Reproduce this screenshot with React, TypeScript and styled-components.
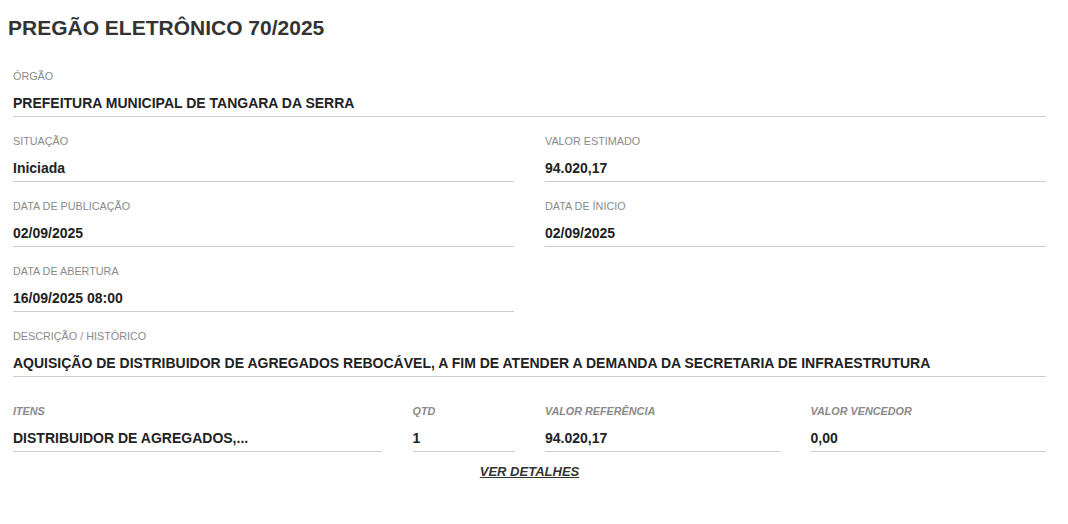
import React from "react";
import styled, { createGlobalStyle } from "styled-components";

const GlobalStyle = createGlobalStyle`
  html, body { margin: 0; padding: 0; background: #ffffff; }
  body { font-family: "Liberation Sans", Arial, sans-serif; }
`;

const Page = styled.div`
  padding: 15px 22px 20px 8px;
`;

const Title = styled.h1`
  margin: 0 0 29px 0;
  font-size: 21px;
  line-height: 25px;
  font-weight: 700;
  color: #333333;
`;

const Details = styled.div`
  margin-left: 5px;
  display: flex;
  flex-direction: column;
  gap: 17px;
`;

const TwoCols = styled.div`
  display: grid;
  grid-template-columns: 1fr 1fr;
  column-gap: 31px;
`;

const ItemsGrid = styled.div`
  margin-top: 10px;
  display: grid;
  grid-template-columns: 369px 102px 235px 235px;
  column-gap: 30.5px;
`;

const Field = styled.div`
  display: flex;
  flex-direction: column;
  padding-bottom: 4px;
  border-bottom: 1px solid #cccccc;
`;

const Label = styled.span<{ $italic?: boolean }>`
  font-size: 10.8px;
  line-height: 14px;
  margin-bottom: 11px;
  color: #8a8a8a;
  font-weight: ${(p) => (p.$italic ? 700 : 400)};
  font-style: ${(p) => (p.$italic ? "italic" : "normal")};
  text-transform: uppercase;
`;

const Value = styled.span`
  font-size: 14px;
  line-height: 18px;
  font-weight: 700;
  color: #222222;
  white-space: nowrap;
`;

const LinkRow = styled.div`
  display: flex;
  justify-content: center;
  margin-top: -6px;
`;

const DetailsLink = styled.a`
  font-size: 13px;
  line-height: 18px;
  font-weight: 700;
  font-style: italic;
  color: #333333;
  text-decoration: underline;
  cursor: pointer;
`;

const Info = ({ label, value, italic }: { label: string; value: string; italic?: boolean }) => (
  <Field>
    <Label $italic={italic}>{label}</Label>
    <Value>{value}</Value>
  </Field>
);

export default function App() {
  return (
    <>
      <GlobalStyle />
      <Page>
        <Title>PREGÃO ELETRÔNICO 70/2025</Title>
        <Details>
          <Info label="Órgão" value="PREFEITURA MUNICIPAL DE TANGARA DA SERRA" />
          <TwoCols>
            <Info label="Situação" value="Iniciada" />
            <Info label="Valor Estimado" value="94.020,17" />
          </TwoCols>
          <TwoCols>
            <Info label="Data de Publicação" value="02/09/2025" />
            <Info label="Data de Ínicio" value="02/09/2025" />
          </TwoCols>
          <TwoCols>
            <Info label="Data de Abertura" value="16/09/2025 08:00" />
          </TwoCols>
          <Info
            label="Descrição / Histórico"
            value="AQUISIÇÃO DE DISTRIBUIDOR DE AGREGADOS REBOCÁVEL, A FIM DE ATENDER A DEMANDA DA SECRETARIA DE INFRAESTRUTURA"
          />
          <ItemsGrid>
            <Info italic label="Itens" value="DISTRIBUIDOR DE AGREGADOS,..." />
            <Info italic label="QTD" value="1" />
            <Info italic label="Valor Referência" value="94.020,17" />
            <Info italic label="Valor Vencedor" value="0,00" />
          </ItemsGrid>
          <LinkRow>
            <DetailsLink>VER DETALHES</DetailsLink>
          </LinkRow>
        </Details>
      </Page>
    </>
  );
}
